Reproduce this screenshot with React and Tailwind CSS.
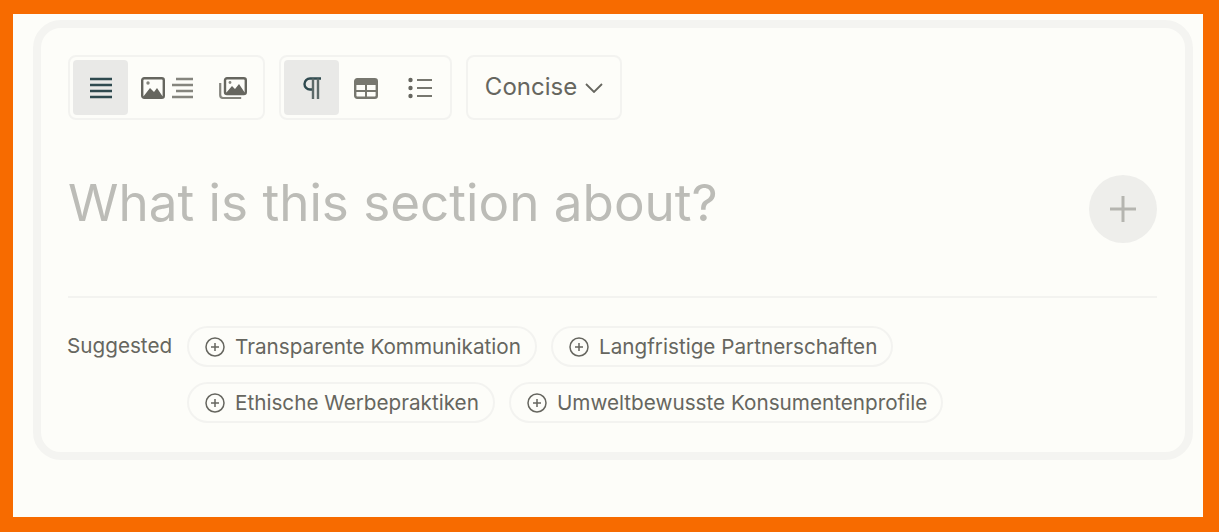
const font = { fontFamily: "Inter, 'Liberation Sans', sans-serif" }

function AlignIcon() {
  return (
    <svg width="22" height="22" viewBox="0 0 22 22" fill="none" stroke="#2f4a4f" strokeWidth="2.6">
      <path d="M0 2h22M0 8h22M0 14h22M0 20h22" />
    </svg>
  )
}

function ImageTextIcon() {
  return (
    <svg width="52" height="22" viewBox="0 0 52 22" fill="none">
      <rect x="1.2" y="1.2" width="21.6" height="19.6" rx="2" stroke="#66665f" strokeWidth="2.4" />
      <path d="M2 20l7-9 4 4 3-4 6 9z" fill="#66665f" />
      <circle cx="7" cy="6" r="1.7" fill="#85857e" />
      <path d="M35 2h17M31 8h21M35 14h17M31 20h21" stroke="#85857e" strokeWidth="2.4" />
    </svg>
  )
}

function ImagesIcon() {
  return (
    <svg width="28" height="22" viewBox="0 0 28 22" fill="none">
      <rect x="6" y="1.2" width="20.8" height="15.8" rx="2" stroke="#66665f" strokeWidth="2.4" />
      <path d="M7 16l6-7 3 3 4-5 6 9z" fill="#66665f" />
      <circle cx="11" cy="5.5" r="1.4" fill="#85857e" />
      <path d="M1.2 6v12a3 3 0 0 0 3 3h18" stroke="#85857e" strokeWidth="2.2" />
    </svg>
  )
}

function ParagraphIcon() {
  return (
    <svg width="20" height="22" viewBox="0 0 20 22" fill="none" stroke="#2f4a4f" strokeWidth="2.4">
      <path d="M19 1.5H8a5.5 5.5 0 0 0 0 11h3" />
      <path d="M11 1.5V22M16 1.5V22" stroke="#5d6a69" />
    </svg>
  )
}

function TableIcon() {
  return (
    <svg width="24" height="22" viewBox="0 0 24 22" fill="none">
      <rect x="1.2" y="2.2" width="21.6" height="18.6" rx="2" stroke="#77776f" strokeWidth="2.4" />
      <path d="M1 4a2 2 0 0 1 2-2h18a2 2 0 0 1 2 2v4H1z" fill="#77776f" />
      <path d="M1 14h22M12 8v13" stroke="#77776f" strokeWidth="2" />
    </svg>
  )
}

function ListIcon() {
  return (
    <svg width="24" height="22" viewBox="0 0 24 22" fill="none">
      <circle cx="2.5" cy="3" r="2.2" fill="#66665f" />
      <circle cx="2.5" cy="11" r="2.2" fill="#66665f" />
      <circle cx="2.5" cy="19" r="2.2" fill="#66665f" />
      <path d="M9 3h15M9 11h15M9 19h15" stroke="#77776f" strokeWidth="2.2" />
    </svg>
  )
}

function ChevronIcon() {
  return (
    <svg width="18" height="10" viewBox="0 0 18 10" fill="none" stroke="#66665f" strokeWidth="1.8">
      <path d="M1 1l8 8 8-8" />
    </svg>
  )
}

function PlusCircle() {
  return (
    <svg width="20" height="20" viewBox="0 0 20 20" fill="none" stroke="#66665f" strokeWidth="1.5" className="shrink-0">
      <circle cx="10" cy="10" r="9" />
      <path d="M10 6v8M6 10h8" />
    </svg>
  )
}

function ToolButton({ active, width, children }) {
  return (
    <div className={`flex h-[55px] items-center justify-center rounded ${width} ${active ? "bg-[#e9e9e7]" : ""}`}>
      {children}
    </div>
  )
}

function Chip({ label }) {
  return (
    <div className="flex h-[41px] items-center gap-[10px] rounded-full border-2 border-[#f3f3f0] pr-[14px] pl-[16px] text-[20.7px] whitespace-nowrap text-[#66665f]">
      <PlusCircle />
      <span>{label}</span>
    </div>
  )
}

export default function App() {
  return (
    <div
      style={font}
      className="box-border h-[532px] w-full border-t-[14px] border-r-[16px] border-b-[15px] border-l-[13px] border-[#f76b00] bg-[#fdfdf9] pt-[6px] pr-[10px] pl-[20px]"
    >
      <div className="box-border h-[440px] rounded-[28px] border-8 border-[#f4f4f1] pt-[27px] pr-[28px] pl-[27px]">
        <div className="flex gap-[14px]">
          <div className="flex h-[65px] items-center rounded-lg border-2 border-[#f3f3f0] px-[3px]">
            <ToolButton active width="w-[55px]"><AlignIcon /></ToolButton>
            <ToolButton width="w-[78px]"><ImageTextIcon /></ToolButton>
            <ToolButton width="w-[54px]"><ImagesIcon /></ToolButton>
          </div>
          <div className="flex h-[65px] items-center rounded-lg border-2 border-[#f3f3f0] px-[3px]">
            <ToolButton active width="w-[55px]"><ParagraphIcon /></ToolButton>
            <ToolButton width="w-[54px]"><TableIcon /></ToolButton>
            <ToolButton width="w-[54px]"><ListIcon /></ToolButton>
          </div>
          <div className="flex h-[65px] w-[156px] items-center justify-center gap-[8px] rounded-lg border-2 border-[#f3f3f0] text-[24px] text-[#66665f]">
            <span className="mb-[2px]">Concise</span>
            <ChevronIcon />
          </div>
        </div>

        <div className="flex h-[178px] items-center justify-between border-b-2 border-[#f3f3f0]">
          <span className="mb-[11px] text-[51.2px] leading-none text-[#bcbcb7]">What is this section about?</span>
          <div className="mt-[2px] flex h-[68px] w-[68px] items-center justify-center rounded-full bg-[#eeeeeb]">
            <svg width="28" height="28" viewBox="0 0 28 28" fill="none" stroke="#b5b5b0" strokeWidth="3">
              <path d="M14 1v26M1 14h26" />
            </svg>
          </div>
        </div>

        <div className="flex pt-[28px]">
          <div className="w-[119px] shrink-0 -translate-x-px pt-[4px] text-[20.7px] text-[#66665f]">Suggested</div>
          <div className="flex flex-col gap-[15px]">
            <div className="flex gap-[14px]">
              <Chip label="Transparente Kommunikation" />
              <Chip label="Langfristige Partnerschaften" />
            </div>
            <div className="flex gap-[14px]">
              <Chip label="Ethische Werbepraktiken" />
              <Chip label="Umweltbewusste Konsumentenprofile" />
            </div>
          </div>
        </div>
      </div>
    </div>
  )
}
